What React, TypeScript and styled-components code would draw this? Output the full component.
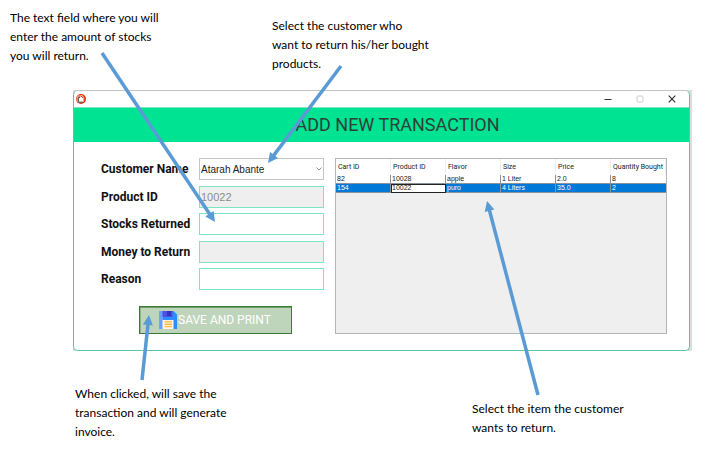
import React from "react";
import styled, { createGlobalStyle } from "styled-components";

const GlobalStyle = createGlobalStyle`
  * { box-sizing: border-box; }
  body { margin: 0; background: #ffffff; }
`;

const Page = styled.main`
  position: relative;
  padding: 8px 18px 14px 0;
  font-family: Roboto, "Liberation Sans", sans-serif;
`;

const TopNotes = styled.div`
  display: grid;
  grid-template-columns: 262px 1fr;
  height: 82px;
  padding-left: 10px;
`;

const BottomNotes = styled.div`
  display: grid;
  grid-template-columns: 397px 1fr;
  margin-top: 33px;
  padding-left: 75px;
`;

const Note = styled.p<{ $lowered?: boolean; $dropped?: boolean }>`
  margin: 0;
  padding-top: ${(p) => (p.$dropped ? "15px" : p.$lowered ? "8px" : "0")};
  font-family: Lato, sans-serif;
  font-size: 12px;
  line-height: 19px;
  color: #000000;
`;

const Backdrop = styled.div`
  margin-left: 73px;
  padding-right: 2px;
  background: #dcdcdc;
`;

const Dialog = styled.section`
  background: #ffffff;
  border: 1px solid #5fc4a0;
  border-top-color: #c4c4c4;
  border-radius: 5px;
  overflow: hidden;
`;

const TitleBar = styled.header`
  display: flex;
  align-items: center;
  justify-content: space-between;
  height: 17px;
  padding: 0 9px 0 1px;
  border-bottom: 1px solid #7be8bf;
`;

const WindowButtons = styled.div`
  display: flex;
  gap: 16px;
`;

const WindowButton = styled.button`
  display: grid;
  place-items: center;
  width: 16px;
  height: 16px;
  padding: 0;
  border: 0;
  background: transparent;
  color: #333333;

  &:disabled { color: #cccccc; }
`;

const Heading = styled.h1`
  margin: 0;
  padding-left: 32px;
  background: #00e392;
  color: #2d3f38;
  font-size: 18px;
  font-weight: 400;
  line-height: 34px;
  text-align: center;
`;

const Content = styled.div`
  display: grid;
  grid-template-columns: 223px 1fr;
  gap: 11px;
  padding: 16px 22px 16px 27px;
`;

const Form = styled.form`
  display: flex;
  flex-direction: column;
  height: 176px;
`;

const Fields = styled.div`
  display: flex;
  flex-direction: column;
  justify-content: space-between;
  height: 132px;
`;

const Field = styled.div`
  display: grid;
  grid-template-columns: 98px 1fr;
  align-items: center;
`;

const Label = styled.label`
  font-size: 12px;
  font-weight: 700;
  line-height: 22px;
  white-space: nowrap;
  color: #111111;
`;

const TextBox = styled.input`
  width: 100%;
  height: 22px;
  padding: 0 1px;
  border: 1px solid #7ce6c0;
  border-radius: 0;
  outline: 0;
  background: #ffffff;
  font-family: "Liberation Sans", sans-serif;
  font-size: 11px;
  color: #222222;

  &:disabled {
    background: #efefef;
    color: #8c8c8c;
  }
`;

const SelectWrap = styled.div`
  display: grid;
  align-items: center;

  > * { grid-area: 1 / 1; }
  > svg { justify-self: end; margin-right: 2px; pointer-events: none; }
`;

const Select = styled.select`
  appearance: none;
  width: 100%;
  height: 22px;
  padding: 0 1px;
  border: 1px solid #c6c6c6;
  border-radius: 0;
  background: #ffffff;
  font-family: "Liberation Sans", sans-serif;
  font-size: 10px;
  color: #222222;
`;

const SaveButton = styled.button`
  display: flex;
  align-items: center;
  align-self: flex-start;
  width: 153px;
  height: 28px;
  margin: 16px 0 0 38px;
  padding: 0 0 0 18px;
  border: 1px solid #3c7a35;
  border-radius: 0;
  background: #bfd5bb;
  box-shadow: inset 0 1px 0 #6f9d69, inset 1px 0 0 #8fb38a;
  color: #ffffff;
  font-family: Roboto, sans-serif;
  font-size: 12px;
  white-space: nowrap;
`;

const TablePanel = styled.div`
  border: 1px solid #b5b5b9;
  background: #efefef;
`;

const Table = styled.table`
  width: 100%;
  table-layout: fixed;
  border-collapse: separate;
  border-spacing: 0;
  font-size: 7px;
  line-height: 8px;
  white-space: nowrap;
  color: #222222;
`;

const HeadCell = styled.th`
  height: 16px;
  padding: 0 0 0 2px;
  border-right: 1px solid #eeeeee;
  background: #ffffff;
  font-weight: 400;
  text-align: left;
`;

const Row = styled.tr<{ $selected?: boolean }>`
  background: ${(p) => (p.$selected ? "#0078d7" : "#ffffff")};
  color: ${(p) => (p.$selected ? "#ffffff" : "#222222")};
`;

const Cell = styled.td<{ $focused?: boolean }>`
  height: 9px;
  padding: 0 0 0 1px;
  border-right: 1px solid #8b9299;
  border-bottom: 1px solid #8b9299;
  font-family: "Liberation Sans", sans-serif;
  ${(p) =>
    p.$focused &&
    "background: #ffffff; color: #222222; outline: 1px solid #222222; outline-offset: -1px;"}

  &:last-child { border-right: 0; }
`;

const ArrowLayer = styled.svg`
  position: absolute;
  top: 0;
  left: 0;
  width: 100%;
  height: 452px;
  pointer-events: none;
`;

const AppLogo = () => (
  <svg width="12" height="12" viewBox="0 0 12 12" aria-hidden="true">
    <circle cx="6" cy="6" r="5" fill="#e8260f" />
    <circle cx="5.4" cy="6" r="4" fill="#f79a78" />
    <path d="M3.400 4 5 4.400l1.500-1.500 1.500 1.600.3 4.600H3.400z" fill="#ffffff" />
    <path d="M3.200 5.200 4.200 3.800l.6 1.200M6 3.200l1.800 1.500M3.400 5v4.100H8" fill="none" stroke="#443d3d" strokeWidth=".9" />
    <path d="m6.300 2.200 1.500.6" stroke="#f6c623" strokeWidth="1.200" />
  </svg>
);

const Floppy = () => (
  <svg width="20" height="20" viewBox="0 0 20 20" aria-hidden="true">
    <path d="M1.500 1h14L19 4.500V19H1.500z" fill="#2a8cff" />
    <path d="M1.500 1H5v18H1.500z" fill="#6b9dff" />
    <path d="M4.500 1h10v6h-10z" fill="#4d50e0" />
    <path d="M9 1h4v5H9z" fill="#3434bd" />
    <path d="M4.500 10h11v9h-11z" fill="#fff6e6" />
    <path d="M6.500 11.800h7.500M6.500 14.200h7.500M6.500 16.600h7.500" stroke="#ffbd55" strokeWidth="1.500" />
  </svg>
);

const columns = ["Cart ID", "Product ID", "Flavor", "Size", "Price", "Quantity Bought"];
const rows = [
  ["82", "10028", "apple", "1 Liter", "2.0", "8"],
  ["154", "10022", "puro", "4 Liters", "35.0", "2"],
];
const selectedRow = 1;
const focusedColumn = 1;

const arrows = [
  [102, 53, 215, 222],
  [341, 66, 268, 163],
  [142, 380, 149, 315],
  [538, 395, 487, 201],
];

const Arrows = () => (
  <ArrowLayer viewBox="0 0 710 452" preserveAspectRatio="none" aria-hidden="true">
    {arrows.map(([x1, y1, x2, y2]) => {
      const length = Math.hypot(x2 - x1, y2 - y1);
      const angle = (Math.atan2(y2 - y1, x2 - x1) * 180) / Math.PI;
      return (
        <g key={x1} transform={`translate(${x1} ${y1}) rotate(${angle})`} fill="#5b9bd5">
          <rect x="0" y="-1.75" width={length - 7} height="3.5" />
          <path d={`M${length} 0l-10-5v10z`} />
        </g>
      );
    })}
  </ArrowLayer>
);

export default function App() {
  return (
    <Page>
      <GlobalStyle />
      <TopNotes>
        <Note>
          The text field where you will
          <br />
          enter the amount of stocks
          <br />
          you will return.
        </Note>
        <Note $lowered>
          Select the customer who
          <br />
          want to return his/her bought
          <br />
          products.
        </Note>
      </TopNotes>

      <Backdrop>
        <Dialog aria-labelledby="dialog-title">
          <TitleBar>
            <AppLogo />
            <WindowButtons>
              <WindowButton type="button" aria-label="Minimize">
                <svg width="8" height="8" viewBox="0 0 8 8">
                  <path d="M.5 4.500h7" stroke="currentColor" />
                </svg>
              </WindowButton>
              <WindowButton type="button" aria-label="Maximize" disabled>
                <svg width="8" height="8" viewBox="0 0 8 8">
                  <rect x="1" y="1" width="6" height="6" rx="1" fill="none" stroke="currentColor" />
                </svg>
              </WindowButton>
              <WindowButton type="button" aria-label="Close">
                <svg width="8" height="8" viewBox="0 0 8 8">
                  <path d="m.7.7 6.600 6.600M7.300.7.7 7.300" stroke="currentColor" strokeWidth="1.200" />
                </svg>
              </WindowButton>
            </WindowButtons>
          </TitleBar>
          <Heading id="dialog-title">ADD NEW TRANSACTION</Heading>
          <Content>
            <Form onSubmit={(e) => e.preventDefault()}>
              <Fields>
                <Field>
                  <Label htmlFor="customer">Customer Name</Label>
                  <SelectWrap>
                    <Select id="customer" defaultValue="Atarah Abante">
                      <option>Atarah Abante</option>
                    </Select>
                    <svg width="6" height="4" viewBox="0 0 6 4" aria-hidden="true">
                      <path d="m.5.5 2.500 2.500L5.500.5" fill="none" stroke="#777777" strokeWidth=".8" />
                    </svg>
                  </SelectWrap>
                </Field>
                <Field>
                  <Label htmlFor="product">Product ID</Label>
                  <TextBox id="product" defaultValue="10022" disabled />
                </Field>
                <Field>
                  <Label htmlFor="stocks">Stocks Returned</Label>
                  <TextBox id="stocks" />
                </Field>
                <Field>
                  <Label htmlFor="money">Money to Return</Label>
                  <TextBox id="money" disabled />
                </Field>
                <Field>
                  <Label htmlFor="reason">Reason</Label>
                  <TextBox id="reason" />
                </Field>
              </Fields>
              <SaveButton type="submit">
                <Floppy />
                SAVE AND PRINT
              </SaveButton>
            </Form>
            <TablePanel>
              <Table>
                <thead>
                  <tr>
                    {columns.map((name) => (
                      <HeadCell key={name} scope="col">{name}</HeadCell>
                    ))}
                  </tr>
                </thead>
                <tbody>
                  {rows.map((row, r) => (
                    <Row key={row[0]} $selected={r === selectedRow}>
                      {row.map((value, c) => (
                        <Cell key={columns[c]} $focused={r === selectedRow && c === focusedColumn}>
                          {value}
                        </Cell>
                      ))}
                    </Row>
                  ))}
                </tbody>
              </Table>
            </TablePanel>
          </Content>
        </Dialog>
      </Backdrop>

      <BottomNotes>
        <Note>
          When clicked, will save the
          <br />
          transaction and will generate
          <br />
          invoice.
        </Note>
        <Note $dropped>
          Select the item the customer
          <br />
          wants to return.
        </Note>
      </BottomNotes>
      <Arrows />
    </Page>
  );
}
